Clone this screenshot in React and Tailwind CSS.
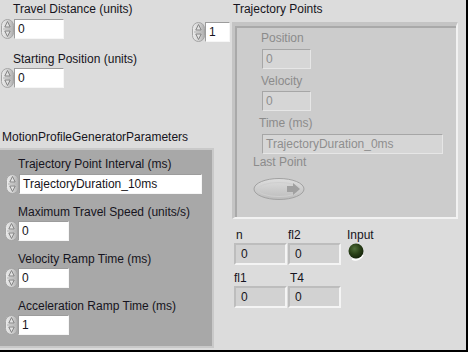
import React from "react";

const Spinner = ({ h = 20 }) => (
  <svg width="13" height={h} viewBox={`0 0 13 ${h}`} className="shrink-0">
    <defs>
      <linearGradient id="spg" x1="0" y1="0" x2="1" y2="0">
        <stop offset="0" stopColor="#ececec" />
        <stop offset="0.55" stopColor="#d2d2d2" />
        <stop offset="1" stopColor="#adadad" />
      </linearGradient>
    </defs>
    <rect x="0.5" y="0.5" width="12" height={h - 1} rx="6" fill="url(#spg)" stroke="#a4a4a4" />
    <line x1="2" y1={h / 2} x2="11" y2={h / 2} stroke="#b4b4b4" />
    <path d={`M3.8 ${h / 2 - 2} L6.5 ${h / 2 - 7.5} L9.2 ${h / 2 - 2} Z`} fill="#e2e2e2" stroke="#7c7c7c" strokeWidth="0.9" />
    <path d={`M3.8 ${h / 2 + 2} L6.5 ${h / 2 + 7.5} L9.2 ${h / 2 + 2} Z`} fill="#e2e2e2" stroke="#7c7c7c" strokeWidth="0.9" />
  </svg>
);

const Numeric = ({ value, w = "w-[50px]", className = "" }) => (
  <div className={`flex items-center ${className}`}>
    <Spinner />
    <div className={`${w} h-[20px] bg-white border-t border-l border-[#9c9c9c] border-b border-r border-b-[#f6f6f6] border-r-[#f6f6f6] flex items-center pl-[3px]`}>
      {value}
    </div>
  </div>
);

const Label = ({ children, className = "" }) => (
  <div className={`h-[14px] whitespace-nowrap ${className}`}>{children}</div>
);

const DimBox = ({ value, w }) => (
  <div className={`${w} h-[20px] bg-[#d6d6d6] border-t border-l border-[#a6a6a6] border-b border-r border-b-[#e6e6e6] border-r-[#e6e6e6] flex items-center pl-[3px] text-[#8e8e8e]`}>
    {value}
  </div>
);

const Indicator = ({ value }) => (
  <div className="w-[53px] h-[22px] bg-[#d2d2d2] border-2 border-t-[#bdbdbd] border-l-[#bdbdbd] border-b-[#f4f4f4] border-r-[#f4f4f4] flex items-center pl-[5px]">
    {value}
  </div>
);

const LastPointButton = () => (
  <svg width="54" height="24" viewBox="0 0 54 24">
    <defs>
      <linearGradient id="btg" x1="0" y1="0" x2="0" y2="1">
        <stop offset="0" stopColor="#dedede" />
        <stop offset="1" stopColor="#bcbcbc" />
      </linearGradient>
    </defs>
    <ellipse cx="26" cy="12" rx="25" ry="10.5" fill="url(#btg)" stroke="#a2a2a2" />
    <ellipse cx="26" cy="12.5" rx="21" ry="7" fill="none" stroke="#cfcfcf" />
    <path d="M34 9 H40 V6 L47 12 L40 18 V15 H34 Z" fill="#a0a0a0" />
  </svg>
);

const Led = () => (
  <svg width="20" height="18" viewBox="0 0 20 18">
    <defs>
      <radialGradient id="ledg" cx="0.4" cy="0.35" r="0.6">
        <stop offset="0" stopColor="#4f6e3a" />
        <stop offset="0.6" stopColor="#2b4219" />
        <stop offset="1" stopColor="#1a2a0e" />
      </radialGradient>
    </defs>
    <path d="M16 12 A8 8 0 0 1 5 16" fill="none" stroke="#ffffff" strokeWidth="1.5" />
    <circle cx="9" cy="8" r="7.5" fill="url(#ledg)" />
  </svg>
);

export default function App() {
  return (
    <div className="w-[468px] h-[352px] bg-[#dcdcdc] border-r-2 border-b-2 border-black flex overflow-hidden font-['Liberation_Sans',Arial,sans-serif] text-[12px] leading-[14px] text-[#161420]">
      {/* left column */}
      <div className="w-[214px] shrink-0 flex flex-col">
        <Label className="mt-[2px] pl-[13px]">Travel Distance (units)</Label>
        <Numeric value="0" className="mt-[3px] ml-[1px]" />
        <Label className="mt-[13px] pl-[13px]">Starting Position (units)</Label>
        <Numeric value="0" className="mt-[2px] ml-[1px]" />
        <Label className="mt-[42px] pl-[2px]">MotionProfileGeneratorParameters</Label>

        <div className="mt-[4px] w-[214px] h-[200px] bg-[#a8a8a8] border-t-2 border-r-2 border-b-2 border-[#c9c9c9] flex flex-col">
          <Label className="mt-[7px] pl-[18px]">Trajectory Point Interval (ms)</Label>
          <Numeric value="TrajectoryDuration_10ms" w="w-[183px]" className="mt-[3px] ml-[6px]" />
          <Label className="mt-[11px] pl-[18px]">Maximum Travel Speed (units/s)</Label>
          <Numeric value="0" w="w-[51px]" className="mt-[2px] ml-[5px]" />
          <Label className="mt-[11px] pl-[18px]">Velocity Ramp Time (ms)</Label>
          <Numeric value="0" w="w-[51px]" className="mt-[2px] ml-[5px]" />
          <Label className="mt-[11px] pl-[18px]">Acceleration Ramp Time (ms)</Label>
          <Numeric value="1" w="w-[51px]" className="mt-[2px] ml-[5px]" />
        </div>
      </div>

      {/* right column */}
      <div className="flex-1 flex flex-col">
        <Label className="mt-[2px] pl-[19px]">Trajectory Points</Label>
        <div className="mt-[6px] -ml-[22px] flex items-start">
          <Numeric value="1" w="w-[25px]" />
          <div className="ml-[2px] w-[226px] h-[197px] bg-[#c4c4c4] border-t-[4px] border-l-[3px] border-[#c4c4c4] border-b-2 border-r-2 border-b-[#f2f2f2] border-r-[#f2f2f2] flex">
            <div className="flex-1 bg-[#cccccc] border-t-2 border-l-2 border-[#a9a9a9] flex flex-col pl-[22px] text-[#8b8b8b]">
              <Label className="mt-[3px] pl-[2px]">Position</Label>
              <div className="mt-[4px] ml-[3px]"><DimBox value="0" w="w-[49px]" /></div>
              <Label className="mt-[5px] pl-[2px]">Velocity</Label>
              <div className="mt-[3px] ml-[3px]"><DimBox value="0" w="w-[49px]" /></div>
              <Label className="mt-[5px]">Time (ms)</Label>
              <div className="mt-[4px] ml-[3px]"><DimBox value="TrajectoryDuration_0ms" w="w-[181px]" /></div>
              <Label className="mt-[1px] -ml-[6px]">Last Point</Label>
              <div className="mt-[8px] -ml-[6px]"><LastPointButton /></div>
            </div>
          </div>
        </div>

        <div className="mt-[9px] pl-[20px] grid grid-cols-[54px_59px_auto]">
          <Label className="pl-[2px]">n</Label>
          <Label>fl2</Label>
          <Label>Input</Label>
          <div className="mt-[1px]"><Indicator value="0" /></div>
          <div className="mt-[1px]"><Indicator value="0" /></div>
          <div className="mt-[1px]"><Led /></div>
          <Label className="mt-[6px]">fl1</Label>
          <Label className="mt-[6px] pl-[2px]">T4</Label>
          <div />
          <div className="mt-[1px]"><Indicator value="0" /></div>
          <div className="mt-[1px]"><Indicator value="0" /></div>
          <div />
        </div>
      </div>
    </div>
  );
}
